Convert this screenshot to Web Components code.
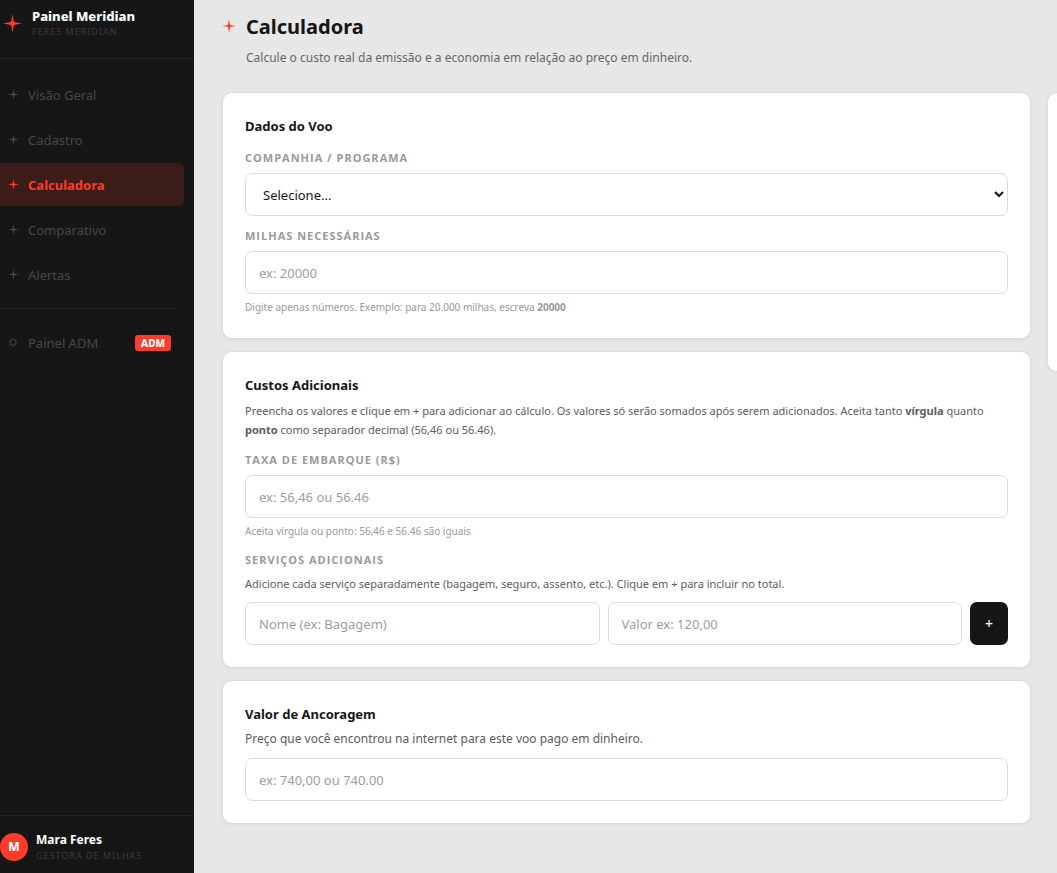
<!DOCTYPE html>
<html lang="pt-BR">
<head>
<meta charset="utf-8">
<title>Painel Meridian</title>
<style>
html, body { margin: 0; height: 100%; }
body { font-family: "Noto Sans", "Open Sans", sans-serif; color: #161616; background: #e7e7e7; }
</style>
</head>
<body>
<meridian-app></meridian-app>
<script>
function define(name, html, setup) {
  const template = document.createElement('template');
  template.innerHTML = html;
  customElements.define(name, class extends HTMLElement {
    constructor() {
      super();
      this.attachShadow({ mode: 'open' }).appendChild(template.content.cloneNode(true));
    }
    connectedCallback() { if (setup) setup(this, this.shadowRoot); }
  });
}

define('star-icon', `
<style>
:host { display: block; flex: none; width: 11px; height: 11px; color: #ff3b2a; }
svg { display: block; width: 100%; height: 100%; }
</style>
<svg viewBox="0 0 20 20" aria-hidden="true"><path fill="currentColor" d="M10 0 L11.2 7.2 Q11.5 8.5 12.8 8.8 L20 10 L12.8 11.2 Q11.5 11.5 11.2 12.8 L10 20 L8.8 12.8 Q8.5 11.5 7.2 11.2 L0 10 L7.2 8.8 Q8.5 8.5 8.8 7.2Z"/></svg>`);

define('nav-item', `
<style>
:host { display: block; }
a { display: flex; align-items: center; gap: 9px; height: 43px; padding: 0 13px 0 8px; border-radius: 0 6px 6px 0;
    color: #484848; font-size: 13px; line-height: 20px; text-decoration: none; }
star-icon { color: #484848; }
svg { display: block; width: 11px; height: 11px; flex: none; }
:host([active]) a { background: #3c1c19; color: #ff3b2a; font-weight: 700; }
:host([active]) star-icon { color: #ff3b2a; }
.label { flex: 1; }
</style>
<a href="#"><star-icon></star-icon><span class="label"><slot></slot></span><slot name="badge"></slot></a>`,
(host, root) => {
  if (host.hasAttribute('admin')) {
    root.querySelector('star-icon').outerHTML =
      '<svg viewBox="0 0 11 11" aria-hidden="true" fill="none" stroke="#484848"><circle cx="5" cy="5.5" r="3"/><circle cx="5" cy="5.5" r="4" stroke-dasharray="1 2.14" stroke-width=".8"/></svg>';
  }
  if (host.hasAttribute('active')) root.querySelector('a').setAttribute('aria-current', 'page');
});

define('side-bar', `
<style>
:host { display: flex; flex-direction: column; background: #161616; color: #fff; }
.brand { display: flex; align-items: center; gap: 10px; height: 59px; box-sizing: border-box; padding: 0 0 12px 3px; border-bottom: 1px solid #242424; }
.brand star-icon { width: 19px; height: 19px; }
.name { font-size: 13px; line-height: 18px; font-weight: 800; }
.sub { font-size: 9px; line-height: 14px; letter-spacing: 1px; color: #3c3c3c; }
nav { display: flex; flex-direction: column; gap: 2px; padding: 14px 10px 0 0; flex: 1; }
hr { border: 0; border-top: 1px solid #242424; margin: 10px 8px 10px 0; width: calc(100% - 8px); }
.badge { background: #ff3b2a; color: #fff; font-size: 10px; line-height: 16px; font-weight: 800; padding: 0 6px; border-radius: 3px; }
.user { display: flex; align-items: center; gap: 8px; height: 58px; box-sizing: border-box; padding-top: 5px; border-top: 1px solid #202020; }
.avatar { width: 28px; height: 28px; border-radius: 50%; background: #ff3b2a; text-align: center; line-height: 28px; font-size: 12px; font-weight: 800; }
.user .name { font-size: 12px; font-weight: 700; }
</style>
<div class="brand"><star-icon></star-icon><div><div class="name">Painel Meridian</div><div class="sub">FERES MERIDIAN</div></div></div>
<nav>
<nav-item>Visão Geral</nav-item>
<nav-item>Cadastro</nav-item>
<nav-item active>Calculadora</nav-item>
<nav-item>Comparativo</nav-item>
<nav-item>Alertas</nav-item>
<hr>
<nav-item admin>Painel ADM<span slot="badge" class="badge">ADM</span></nav-item>
</nav>
<div class="user"><div class="avatar">M</div><div><div class="name">Mara Feres</div><div class="sub">GESTORA DE MILHAS</div></div></div>`);

define('page-header', `
<style>
:host { display: flex; gap: 10px; align-items: flex-start; }
star-icon { width: 14px; height: 14px; margin-top: 6px; }
h1 { margin: 0; font-size: 20px; line-height: 28px; font-weight: 700; }
p { margin: 7px 0 0; font-size: 12px; line-height: 20px; color: #666; }
</style>
<star-icon></star-icon><div><h1><slot></slot></h1><p><slot name="subtitle"></slot></p></div>`);

define('panel-card', `
<style>
:host { display: block; box-sizing: border-box; background: #fff; border: 1px solid #dcdcdc; border-radius: 10px; padding: 22px; box-shadow: 0 1px 4px rgba(0,0,0,.06); }
h2 { margin: 0; font-size: 13px; line-height: 22px; font-weight: 700; }
</style>
<h2><slot name="title"></slot></h2><slot></slot>`);

define('form-field', `
<style>
:host { display: block; min-width: 0; }
label { display: block; margin-bottom: 7px; font-family: "Open Sans", "Noto Sans", sans-serif; font-size: 11px; line-height: 16px; font-weight: 700; letter-spacing: 1px; color: #999; text-transform: uppercase; }
:host([bare]) label { display: none; }
input, select { display: block; width: 100%; height: 43px; box-sizing: border-box; margin: 0; padding: 0 13px; border: 1px solid #dcdcdc; border-radius: 7px;
  background: #fff; color: #161616; font-family: inherit; font-size: 13px; }
select { padding-right: 0; }
input::placeholder { color: #9c9ca8; opacity: 1; }
.hint { display: block; margin-top: 5px; font-size: 10px; line-height: 17px; color: #999; }
</style>
<label for="control"></label>`,
(host, root) => {
  const text = host.getAttribute('label');
  const kind = host.getAttribute('kind') || 'input';
  root.querySelector('label').textContent = text;
  const control = document.createElement(kind);
  control.id = 'control';
  control.setAttribute('aria-label', text);
  if (kind === 'select') control.add(new Option(host.getAttribute('placeholder')));
  else { control.type = 'text'; control.placeholder = host.getAttribute('placeholder'); }
  root.appendChild(control);
  if (host.hasAttribute('hint')) {
    const hint = document.createElement('span');
    hint.className = 'hint';
    hint.innerHTML = '<slot></slot>';
    root.appendChild(hint);
  }
});

define('cost-calculator', `
<style>
:host { display: grid; grid-template-columns: minmax(0, 1fr) 300px; gap: 16px; align-items: start; margin-right: -290px; }
.stack { display: flex; flex-direction: column; gap: 12px; }
.first { margin-top: 13px; }
.next { margin-top: 12px; }
p { margin: 0; color: #5c5c5c; font-size: 11px; line-height: 19px; }
.intro { margin: 5px 0 13px; }
.intro + .next { margin-top: 0; }
.group { margin: 12px 0 6px; font-family: "Open Sans", "Noto Sans", sans-serif; font-size: 11px; line-height: 16px; font-weight: 700; letter-spacing: 1px; color: #999; }
.row { display: grid; grid-template-columns: 1fr 1fr 38px; gap: 8px; margin-top: 9px; }
.wide { margin: 4px 0 9px; font-size: 12px; line-height: 20px; }
button { border: 0; border-radius: 7px; padding: 0; background: #161616; color: #fff; font-family: inherit; font-size: 14px; font-weight: 500; }
.summary { height: 280px; }
</style>
<div class="stack">
<panel-card><span slot="title">Dados do Voo</span>
<form-field class="first" kind="select" label="Companhia / Programa" placeholder="Selecione..."></form-field>
<form-field class="next" label="Milhas necessárias" placeholder="ex: 20000" hint>Digite apenas números. Exemplo: para 20.000 milhas, escreva <b>20000</b></form-field>
</panel-card>
<panel-card><span slot="title">Custos Adicionais</span>
<p class="intro">Preencha os valores e clique em + para adicionar ao cálculo. Os valores só serão somados após serem adicionados. Aceita tanto <b>vírgula</b> quanto <b>ponto</b> como separador decimal (56,46 ou 56.46).</p>
<form-field class="next" label="Taxa de embarque (R$)" placeholder="ex: 56,46 ou 56.46" hint>Aceita vírgula ou ponto: 56,46 e 56.46 são iguais</form-field>
<div class="group">SERVIÇOS ADICIONAIS</div>
<p>Adicione cada serviço separadamente (bagagem, seguro, assento, etc.). Clique em + para incluir no total.</p>
<div class="row"><form-field bare label="Nome" placeholder="Nome (ex: Bagagem)"></form-field><form-field bare label="Valor" placeholder="Valor ex: 120,00"></form-field><button type="button">+</button></div>
</panel-card>
<panel-card><span slot="title">Valor de Ancoragem</span>
<p class="wide">Preço que você encontrou na internet para este voo pago em dinheiro.</p>
<form-field bare label="Valor de Ancoragem" placeholder="ex: 740,00 ou 740.00"></form-field>
</panel-card>
</div>
<panel-card class="summary"></panel-card>`);

define('meridian-app', `
<style>
:host { display: grid; grid-template-columns: 194px minmax(0, 1fr); min-height: 100%; }
main { overflow: hidden; padding: 13px 0 28px 28px; }
page-header { margin-bottom: 24px; }
</style>
<side-bar></side-bar>
<main><page-header>Calculadora<span slot="subtitle">Calcule o custo real da emissão e a economia em relação ao preço em dinheiro.</span></page-header>
<cost-calculator></cost-calculator></main>`);
</script>
</body>
</html>
